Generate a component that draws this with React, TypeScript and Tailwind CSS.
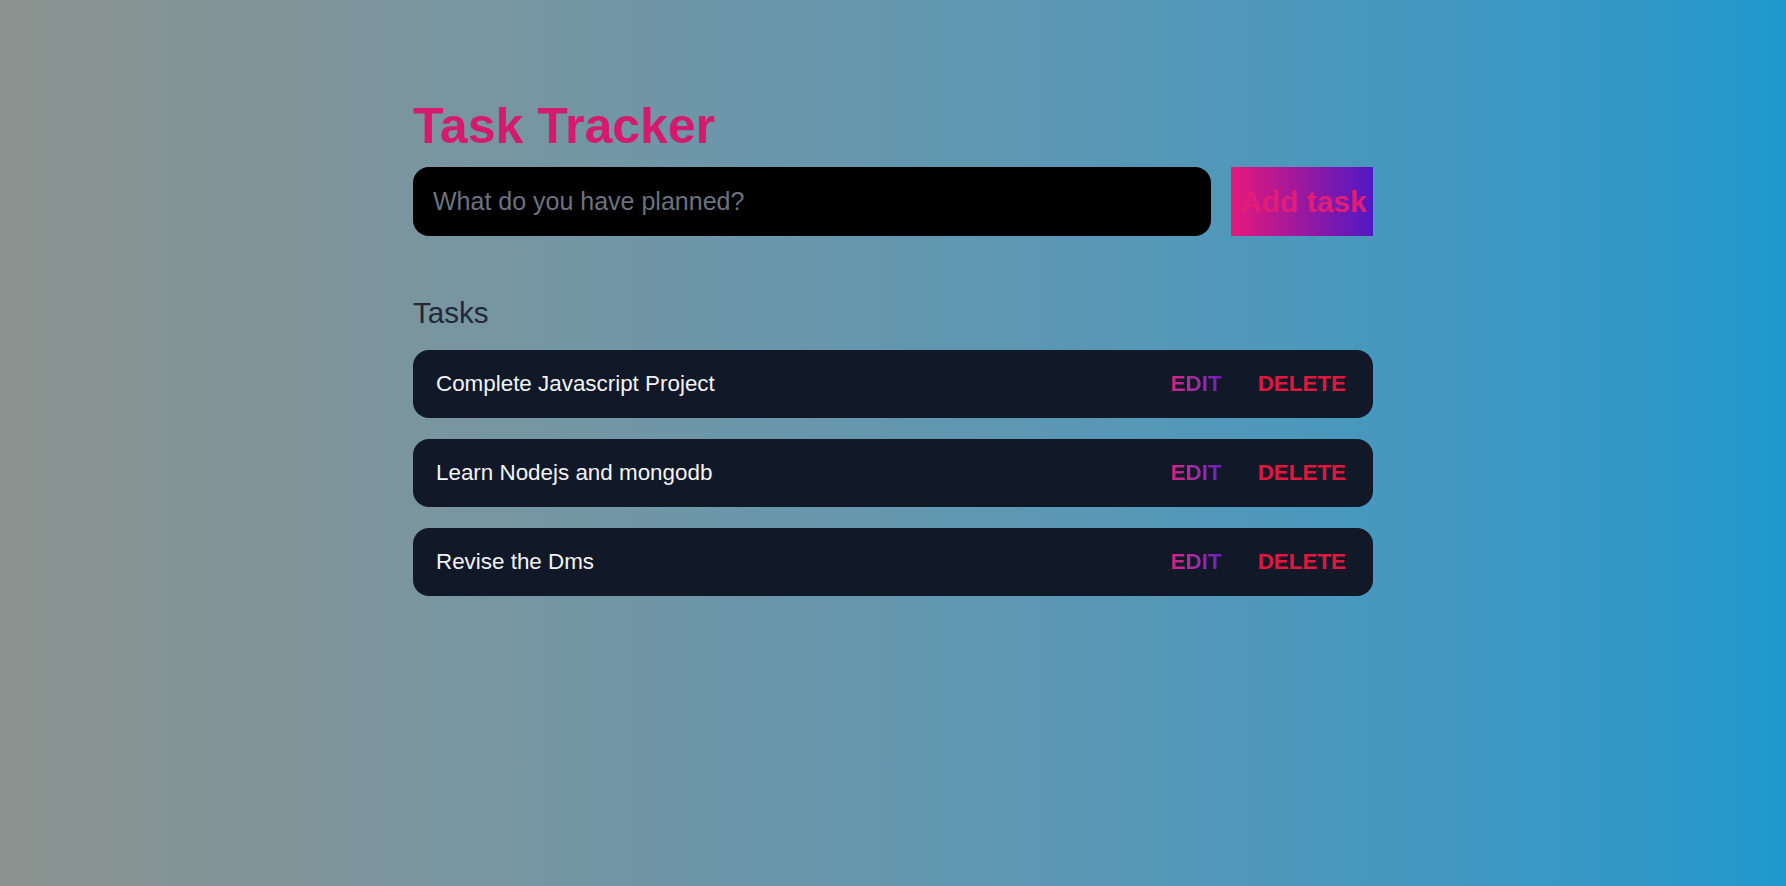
import { useState } from 'react'

const initialTasks = [
  { id: 1, name: 'Complete Javascript Project' },
  { id: 2, name: 'Learn Nodejs and mongodb' },
  { id: 3, name: 'Revise the Dms' },
]

function TaskRow({ name }: { name: string }) {
  return (
    <li className="flex h-[68px] items-center justify-between rounded-2xl bg-[#111827] pl-[23px] pr-[27px]">
      <span className="text-[1.4rem] text-[#f3f4f6]">{name}</span>
      <div className="flex items-center gap-[36px]">
        <button className="bg-gradient-to-r from-[#d41f86] to-[#6a1bb8] bg-clip-text text-[1.4rem] font-bold text-transparent">
          EDIT
        </button>
        <button className="text-[1.4rem] font-bold text-[#e2163f]">DELETE</button>
      </div>
    </li>
  )
}

export default function App() {
  const [tasks] = useState(initialTasks)
  const [value, setValue] = useState('')

  return (
    <div
      className="min-h-screen bg-gradient-to-r from-[#8b938f] to-[#1e98cc] pt-[97px] leading-[normal]"
      style={{ fontFamily: '"Liberation Sans", Arial, sans-serif' }}
    >
      <main className="mx-auto w-[960px]">
        <h1 className="text-[50px] font-bold leading-[normal] text-[#d5196d]">Task Tracker</h1>

        {/* new task form */}
        <form className="mt-[12px] flex gap-[20px]" onSubmit={(e) => e.preventDefault()}>
          <input
            value={value}
            onChange={(e) => setValue(e.target.value)}
            placeholder="What do you have planned?"
            className="h-[69px] flex-1 rounded-2xl bg-black px-[20px] text-[25px] text-white outline-none placeholder:text-[#6b7280]"
          />
          <button
            type="submit"
            className="h-[69px] w-[142px] whitespace-nowrap bg-[linear-gradient(to_right,#e5197b,#5019c2)] pl-[9px] text-left text-[30px] font-bold text-[#e11d78]"
          >
            Add task
          </button>
        </form>

        {/* task list */}
        <section className="mt-[60px]">
          <h2 className="text-[1.85rem] leading-[normal] text-[#1f2937]">Tasks</h2>
          <ul className="mt-[20px] flex flex-col gap-[21px]">
            {tasks.map((t) => (
              <TaskRow key={t.id} name={t.name} />
            ))}
          </ul>
        </section>
      </main>
    </div>
  )
}
